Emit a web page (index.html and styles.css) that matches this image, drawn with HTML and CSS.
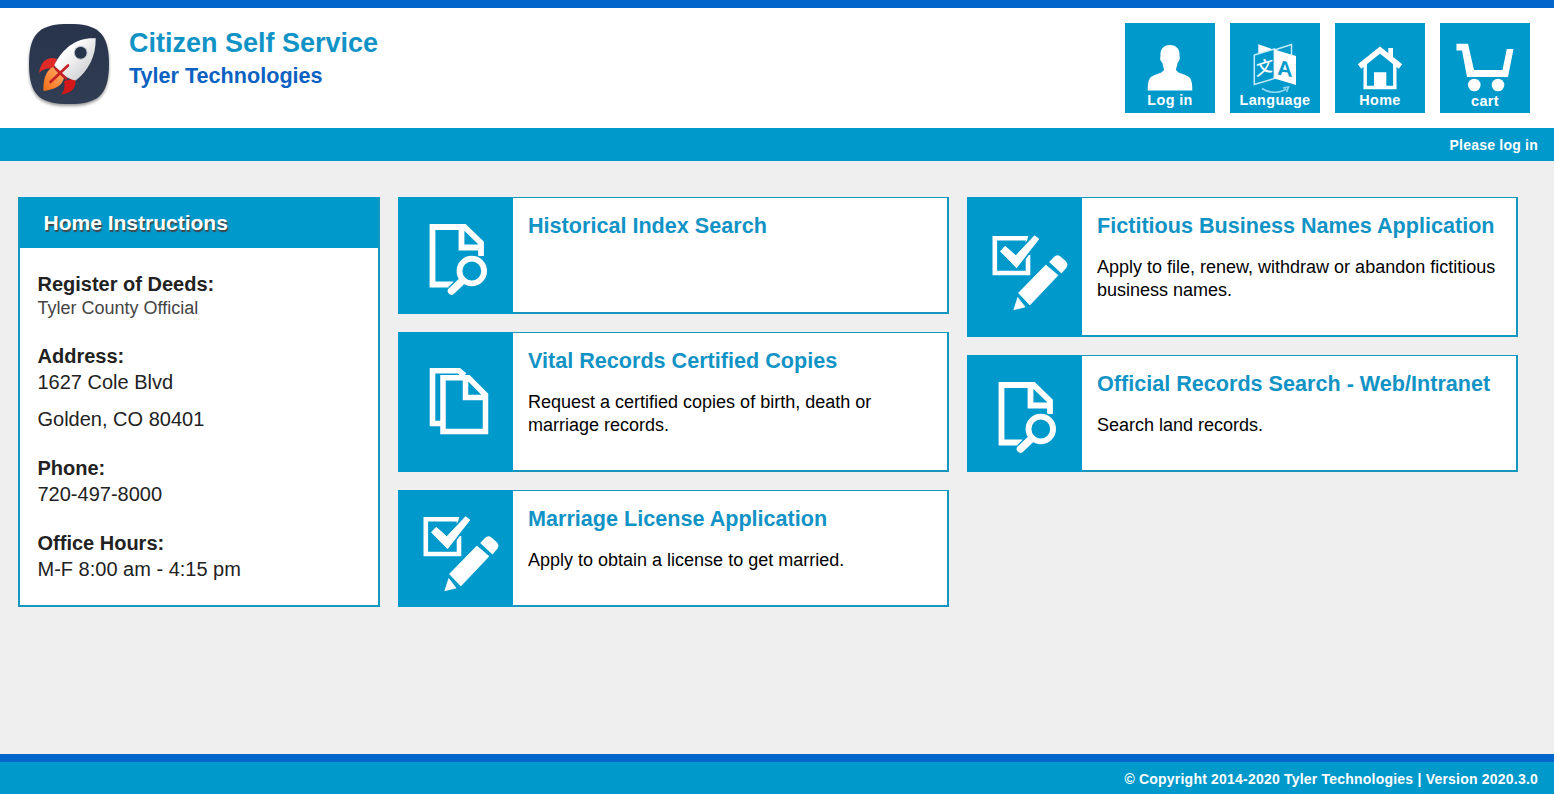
FILE: index.html
```html
<!DOCTYPE html>
<html lang="en">
<head>
<meta charset="utf-8">
<title>Citizen Self Service</title>
<link rel="stylesheet" href="styles.css">
</head>
<body>
<svg class="defs" width="0" height="0" aria-hidden="true">
  <defs>
    <symbol id="search-doc" viewBox="0.500 0 115 117">
      <path d="M83.500 59V46L67 30H35V87.500H56M64 30V50.500H83.500" fill="none" stroke="#fff" stroke-width="5.800"/>
      <circle cx="74.300" cy="74" r="16.800" fill="#09c"/>
      <path d="M66 83L54.500 94" stroke="#09c" stroke-width="11"/>
      <circle cx="74.300" cy="74" r="12.300" fill="none" stroke="#fff" stroke-width="5.800"/>
      <path d="M65 83.500L54 94" stroke="#fff" stroke-width="7.500" stroke-linecap="round"/>
    </symbol>
    <symbol id="check-pencil" viewBox="0.500 0 115 117">
      <path d="M28.300 29.300H61.500V64H28.300Z" fill="none" stroke="#fff" stroke-width="4.600"/>
      <path d="M34 42.300L38.700 37.300L49.300 46.700L68 26.700L72.300 30L50 58.700Z" fill="#fff" stroke="#09c" stroke-width="4" paint-order="stroke"/>
      <path d="M62 26L66 24V46L58 46V42Z" fill="#09c"/>
      <path d="M34 42.300L38.700 37.300L49.300 46.700L68 26.700L72.300 30L50 58.700ZM79.300 56L91.500 66.300L63.300 96L52 84ZM51.300 88.500L58.500 98L47.300 100.700Z" fill="#fff" stroke="#fff" stroke-width=".7" stroke-linejoin="round"/>
      <path d="M82.700 53L87.500 48Q90.500 45 94 47.500L98.500 51.500Q102.500 55 100 58.500L95 64.500Z" fill="#fff"/>
    </symbol>
    <symbol id="copies" viewBox="0.500 11.500 115 117">
      <path d="M44 91H35V38.300H61.500L67 43" fill="none" stroke="#fff" stroke-width="5.600"/>
      <path d="M45.500 45.200H71L88 62.500V98.900H45.500ZM68 45V65H88" fill="none" stroke="#fff" stroke-width="5.500"/>
    </symbol>
  </defs>
</svg>
<header class="header">
  <div class="brand">
    <svg class="logo" viewBox="7 22 84 88" aria-hidden="true">
      <defs>
        <linearGradient id="hull" x1="0" y1="0" x2="1" y2="1"><stop offset=".3" stop-color="#fff"/><stop offset="1" stop-color="#bfc0c3"/></linearGradient>
        <linearGradient id="flame" x1="1" y1="0" x2="0" y2="1"><stop offset="0" stop-color="#ffb169"/><stop offset="1" stop-color="#f36b16"/></linearGradient>
        <linearGradient id="tile" x1="0" y1="0" x2="0" y2="1"><stop offset="0" stop-color="#28344b"/><stop offset="1" stop-color="#303d53"/></linearGradient>
      </defs>
      <path class="tile" d="M49 24C76 24 89 31 89 64S76 104 49 104S9 97 9 64S22 24 49 24Z" fill="url(#tile)"/>
      <path d="M37 59C29 56 21 60 19 73C24 68 29 68 34 69Z" fill="#e02a27"/>
      <path d="M55 78C57 87 53 93 41 94.500C45 90 45 86 44 81Z" fill="#d3181c"/>
      <path d="M33 67L44 78C42 87 32 90 23.500 91C23 81 25 71 33 67Z" fill="url(#flame)"/>
      <path d="M75.700 38.300C58 37 43 47 34.300 65C39 73 47 79 55.700 80.500C68 71 76 57 75.700 38.300Z" fill="url(#hull)"/>
      <path d="M30.500 82L48 65.500M36 69L46 78.500" stroke="#c51f26" stroke-width="2.600" stroke-linecap="round"/>
      <circle cx="60.700" cy="52.800" r="6.400" fill="#26344b" stroke="#bec3c9" stroke-width="1"/>
    </svg>
    <div class="names">
      <h1>Citizen Self Service</h1>
      <h2>Tyler Technologies</h2>
    </div>
  </div>
  <nav class="nav">
    <a class="tile-link">
      <svg viewBox="0 0 90 90"><path d="M45 22C51.500 22 55 26 54.500 33C55.500 37 53.500 38 52.500 40C52 44 51 45 51 47C53 51 62 51 65 55C67 58 67.300 62 67.300 67.500H22.700C22.700 62 23 58 25 55C28 51 37 51 39 47C39 45 38 44 37.500 40C36 38 34.500 37 35.500 33C35 26 38.500 22 45 22Z" fill="#fff"/></svg>
      <span>Log in</span>
    </a>
    <a class="tile-link">
      <svg viewBox="0 0 90 90">
        <path d="M28.300 21.300L44.500 27V31L28.300 32Z" fill="#fff"/>
        <path d="M44.300 27L61.500 21.500V32M24.300 32L44.300 26V55.500L24.300 61.500Z" fill="#09c" stroke="#c4ebfa" stroke-width="1.500"/>
        <path d="M44.300 26.500L66 33V62L44.300 55.500Z" fill="#fff"/>
        <path d="M32 65.500C39 70.500 50 70.500 56 66M53 65L58.500 64L56.500 69" fill="none" stroke="#8fd7f1" stroke-width="1.600"/>
        <text class="glyph-cjk" transform="translate(26 53) skewY(-17)">文</text>
        <text class="glyph-a" transform="translate(47.300 51.500) skewY(10)">A</text>
      </svg>
      <span>Language</span>
    </a>
    <a class="tile-link">
      <svg viewBox="0 0 90 90"><path d="M30.200 41V64.500H59.800V41" fill="none" stroke="#fff" stroke-width="3.400"/><path d="M24.500 43.500L45 27L65.500 43.500" fill="none" stroke="#fff" stroke-width="5.500"/><path d="M53.300 25H58V36L53.300 32ZM39 49.300H51.300V65H39Z" fill="#fff"/></svg>
      <span>Home</span>
    </a>
    <a class="tile-link cart">
      <svg viewBox="0 0 90 90"><path d="M16.500 20.700H28L34 47H62.500L66.800 26H73.500L68 54H27L22 27.500H16.500Z" fill="#fff"/><circle cx="34.300" cy="62" r="6.300" fill="#fff"/><circle cx="58" cy="62" r="6.300" fill="#fff"/></svg>
      <span>cart</span>
    </a>
  </nav>
</header>
<div class="status"><span>Please log in</span></div>
<main class="main">
  <section class="panel">
    <h3><span>Home Instructions</span></h3>
    <dl>
      <dt>Register of Deeds:</dt>
      <dd class="office"><span>Tyler County Official</span></dd>
      <dt>Address:</dt>
      <dd class="street">1627 Cole Blvd</dd>
      <dd class="city">Golden, CO 80401</dd>
      <dt>Phone:</dt>
      <dd class="phone">720-497-8000</dd>
      <dt>Office Hours:</dt>
      <dd>M-F 8:00 am - 4:15 pm</dd>
    </dl>
  </section>
  <div class="column">
    <article class="card">
      <div class="icon"><svg><use href="#search-doc"/></svg></div>
      <div class="text"><h4>Historical Index Search</h4></div>
    </article>
    <article class="card tall">
      <div class="icon"><svg><use href="#copies"/></svg></div>
      <div class="text"><h4>Vital Records Certified Copies</h4><p>Request a certified copies of birth, death or marriage records.</p></div>
    </article>
    <article class="card">
      <div class="icon"><svg><use href="#check-pencil"/></svg></div>
      <div class="text"><h4>Marriage License Application</h4><p>Apply to obtain a license to get married.</p></div>
    </article>
  </div>
  <div class="column">
    <article class="card tall">
      <div class="icon"><svg><use href="#check-pencil"/></svg></div>
      <div class="text"><h4>Fictitious Business Names Application</h4><p>Apply to file, renew, withdraw or abandon fictitious business names.</p></div>
    </article>
    <article class="card">
      <div class="icon"><svg><use href="#search-doc"/></svg></div>
      <div class="text"><h4>Official Records Search - Web/Intranet</h4><p>Search land records.</p></div>
    </article>
  </div>
</main>
<footer class="footer"><span>© Copyright 2014-2020 Tyler Technologies | Version 2020.3.0</span></footer>
</body>
</html>
```
FILE: styles.css
```css
* { box-sizing: border-box; margin: 0; padding: 0; }
body {
  display: flex;
  flex-direction: column;
  height: 794px;
  overflow: hidden;
  background: #efefef;
  font-family: "Liberation Sans", Arial, sans-serif;
  color: #000;
}
.defs { position: absolute; }
.header {
  display: flex;
  justify-content: space-between;
  height: 128px;
  padding: 0 24px 0 27px;
  border-top: 8px solid #06c;
  background: #fff;
}
.brand { display: flex; gap: 18px; padding-top: 14px; }
.logo { width: 84px; height: 88px; }
.tile { filter: drop-shadow(0 2px 1.5px rgba(0, 0, 0, .4)); }
.names { padding-top: 5px; }
.names h1 { font-size: 27px; line-height: 33px; color: #1193c5; }
.names h2 { font-size: 21.600px; line-height: 31px; color: #0b62c0; }
.nav { display: flex; gap: 15px; padding-top: 15px; }
.tile-link {
  display: grid;
  width: 90px;
  height: 90px;
  background: #09c;
  color: #fff;
  font-size: 14.400px;
  font-weight: bold;
  letter-spacing: .35px;
  line-height: 16px;
  text-align: center;
}
.tile-link svg, .tile-link span { grid-area: 1 / 1; }
.tile-link svg { width: 90px; height: 90px; }
.tile-link span { align-self: end; padding-bottom: 5px; }
.cart span { padding-bottom: 4px; }
.glyph-cjk { font: 500 17px "Noto Sans CJK SC", sans-serif; fill: #fff; letter-spacing: 0; }
.glyph-a { font: bold 21px "Liberation Sans", sans-serif; fill: #09c; letter-spacing: 0; }
.status {
  height: 33px;
  padding-right: 16px;
  background: #09c;
  color: #fff;
  font-size: 14px;
  font-weight: bold;
  letter-spacing: .22px;
  line-height: 35px;
  text-align: right;
}
.main {
  display: grid;
  grid-template-columns: 362px 551px 551px;
  align-items: start;
  gap: 18px;
  flex: 1;
  padding: 36px 18px 0;
}
.panel { height: 410px; border: 2px solid #1598bf; border-top: 0; background: #fff; }
.panel h3 {
  height: 51px;
  padding-left: 23.500px;
  background: #09c;
  color: #fff;
  font-size: 21px;
  line-height: 52px;
  text-shadow: 1px 2px 1px #444;
}
.panel dl { padding: 23px 18px 0 17.500px; font-size: 20px; color: #222; }
.panel dt { font-weight: bold; line-height: 26px; }
.panel dd { line-height: 26px; }
.panel .office { font-size: 18px; line-height: 22px; margin-bottom: 24px; color: #444; }
.panel .city { margin: 11px 0 23px; }
.panel .phone { margin-bottom: 23px; }
.column { display: flex; flex-direction: column; gap: 18px; }
.card {
  display: flex;
  height: 117px;
  border: solid #1598bf;
  border-width: 1px 2px 2px 0;
  background: #fff;
}
.tall { height: 140px; }
.icon {
  display: flex;
  align-items: center;
  width: 115px;
  margin: -1px 0 -2px;
  background: #09c;
}
.icon svg { width: 115px; height: 117px; }
.text { flex: 1; padding: 14px 14px 0 15px; }
.text h4 { font-size: 21.600px; line-height: 28px; color: #1193c5; }
.text p { margin-top: 16px; font-size: 18px; line-height: 23px; }
.footer {
  height: 40px;
  padding-right: 16px;
  border-top: 8px solid #06c;
  background: #09c;
  color: #fff;
  font-size: 14px;
  font-weight: bold;
  letter-spacing: .21px;
  line-height: 35px;
  text-align: right;
}
```
